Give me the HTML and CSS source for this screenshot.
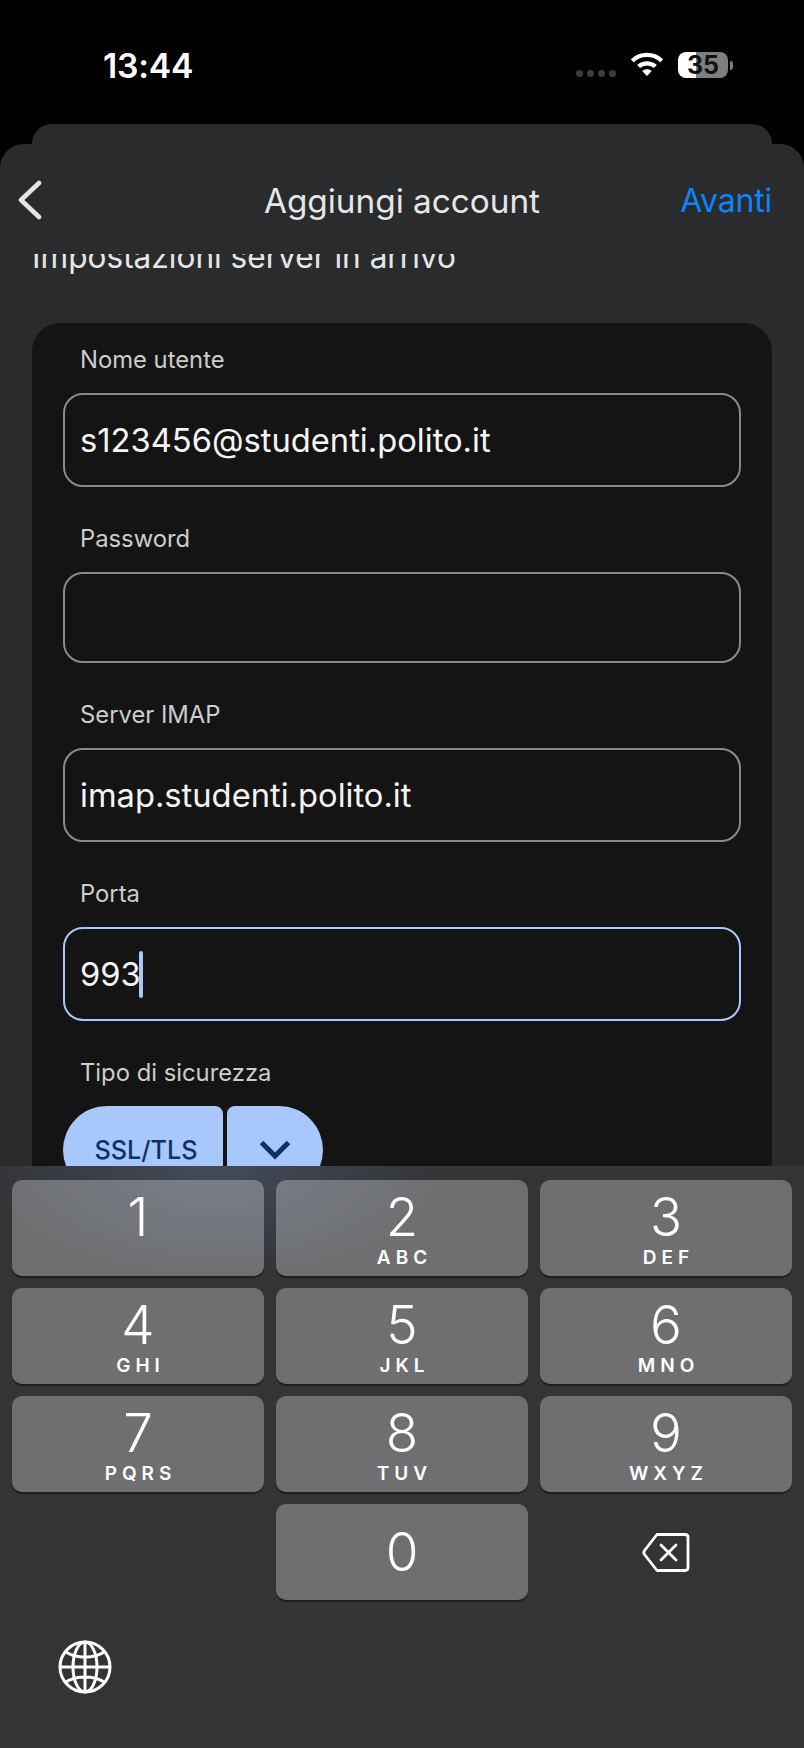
FILE: index.html
```html
<!DOCTYPE html>
<html lang="it">
<head>
<meta charset="utf-8">
<title>Aggiungi account</title>
<link rel="stylesheet" href="styles.css">
</head>
<body>
<div class="screen">
  <div class="status">
    <span class="time">13:44</span>
    <div class="status-right">
      <div class="dots"><i></i><i></i><i></i><i></i></div>
      <svg class="wifi" viewBox="0 0 32 24" width="32" height="24"><path d="M1.300 8.800C9.500 1 22.500 1 30.700 8.800" fill="none" stroke="#fff" stroke-width="4.200"/><path d="M7.600 14.500C12.300 10.200 19.700 10.200 24.400 14.500" fill="none" stroke="#fff" stroke-width="4.200"/><path d="M16 24L11.200 19C14 16.800 18 16.800 20.800 19Z" fill="#fff"/></svg>
      <div class="battery"><span>35</span></div>
      <div class="battery-tip"></div>
    </div>
  </div>
  <div class="sheet-back"></div>
  <div class="sheet">
    <header class="nav">
      <svg class="back" viewBox="0 0 26 40" width="26" height="40"><path d="M22 3L4 20L22 37" fill="none" stroke="#e6e6e6" stroke-width="4.500" stroke-linecap="round" stroke-linejoin="round"/></svg>
      <h1 class="nav-title">Aggiungi account</h1>
      <a class="nav-next">Avanti</a>
    </header>
    <div class="scroll">
      <h2 class="section-title">Impostazioni server in arrivo</h2>
      <div class="card">
        <div class="group">
          <label class="label">Nome utente</label>
          <div class="field">s123456@studenti.polito.it</div>
        </div>
        <div class="group">
          <label class="label">Password</label>
          <div class="field field-empty"></div>
        </div>
        <div class="group">
          <label class="label">Server IMAP</label>
          <div class="field">imap.studenti.polito.it</div>
        </div>
        <div class="group">
          <label class="label">Porta</label>
          <div class="field field-focus">993<span class="caret"></span></div>
        </div>
        <div class="group">
          <label class="label">Tipo di sicurezza</label>
          <div class="split">
            <div class="split-main">SSL/TLS</div>
            <div class="split-arrow"><svg viewBox="0 0 32 20" width="32" height="20"><path d="M2.500 2.500L16 16L29.500 2.500" fill="none" stroke="#0b3070" stroke-width="5"/></svg></div>
          </div>
        </div>
      </div>
    </div>
  </div>
  <div class="keyboard">
    <div class="keys">
      <div class="key"><span class="digit">1</span></div>
      <div class="key"><span class="digit">2</span><span class="letters">ABC</span></div>
      <div class="key"><span class="digit">3</span><span class="letters">DEF</span></div>
      <div class="key"><span class="digit">4</span><span class="letters">GHI</span></div>
      <div class="key"><span class="digit">5</span><span class="letters">JKL</span></div>
      <div class="key"><span class="digit">6</span><span class="letters">MNO</span></div>
      <div class="key"><span class="digit">7</span><span class="letters">PQRS</span></div>
      <div class="key"><span class="digit">8</span><span class="letters">TUV</span></div>
      <div class="key"><span class="digit">9</span><span class="letters">WXYZ</span></div>
      <div class="key-blank"></div>
      <div class="key key-zero"><span class="digit">0</span></div>
      <div class="key-blank key-delete">
        <svg viewBox="0 0 48 41" width="48" height="41"><path d="M15 2.500H43C45 2.500 46 3.500 46 5.500V35.500C46 37.500 45 38.500 43 38.500H15L2.500 22.500C1.500 21 1.500 20 2.500 18.500Z" fill="none" stroke="#fff" stroke-width="2.800" stroke-linejoin="round"/><path d="M19 13L34 28M34 13L19 28" fill="none" stroke="#fff" stroke-width="2.800" stroke-linecap="round"/></svg>
      </div>
    </div>
    <svg class="globe" viewBox="0 0 54 54" width="54" height="54" fill="none" stroke="#fff" stroke-width="3"><circle cx="27" cy="27" r="25"/><ellipse cx="27" cy="27" rx="12" ry="25"/><path d="M27 2V52M2 27H52M7 11.500C18 19 36 19 47 11.500M7 42.500C18 35 36 35 47 42.500"/></svg>
  </div>
</div>
</body>
</html>
```

FILE: styles.css
```css
* { box-sizing: border-box; }
html, body { margin: 0; padding: 0; background: #000; }
body { font-family: Inter, "Liberation Sans", sans-serif; }

.screen { width: 804px; height: 1748px; overflow: hidden; display: flex; flex-direction: column; background: #000; }

.status { height: 124px; flex: none; display: flex; justify-content: space-between; align-items: flex-start; padding: 46px 71px 0 103px; color: #fff; }
.time { font-size: 33.700px; font-weight: 600; line-height: 40px; letter-spacing: -0.2px; }
.status-right { display: flex; align-items: center; height: 38px; }
.dots { display: flex; gap: 4px; margin: 16px 15px 0 0; }
.dots i { width: 7px; height: 7px; border-radius: 50%; background: #3c3c3c; }
.wifi { margin: -2px 15px 0 0; }
.battery { width: 50px; height: 26px; border-radius: 8px; background: linear-gradient(90deg, #fff 0 18px, #7f7f7f 18px); display: flex; align-items: center; justify-content: center; color: #111; font-size: 25px; font-weight: 700; }
.battery-tip { width: 3px; height: 9px; margin-left: 2px; border-radius: 0 3px 3px 0; background: #7f7f7f; }

.sheet-back { height: 20px; flex: none; margin: 0 32px; background: #2a2b2d; border-radius: 24px 24px 0 0; }

.sheet { height: 1022px; flex: none; display: flex; flex-direction: column; background: #2a2b2d; border-radius: 24px 24px 0 0; }
.nav { height: 110px; flex: none; display: grid; grid-template-columns: 1fr auto 1fr; align-items: start; padding: 37px 32px 0; }
.back { margin-left: -15px; margin-top: -1px; }
.nav-title { margin: 0; font-size: 33.300px; font-weight: 400; line-height: 40px; color: #e6e6e6; }
.nav-next { justify-self: end; font-size: 32px; line-height: 40px; color: #0a84ff; letter-spacing: -0.2px; }

.scroll { flex: 1; overflow: hidden; }
.section-title { margin: -17px 32px 0; height: 86px; font-size: 31.600px; font-weight: 400; line-height: 40px; color: #e6e6e6; }
.card { margin: 0 32px; padding: 22px 31px 0; background: #141414; border-radius: 28px; height: 1000px; }

.group { display: flex; flex-direction: column; gap: 18px; margin-bottom: 37px; }
.label { font-size: 23.800px; line-height: 30px; padding-left: 17px; color: #cdcdcd; }
.field { height: 94px; display: flex; align-items: center; padding-left: 15px; border: 2px solid #8a8a8a; border-radius: 20px; font-size: 32.700px; color: #f4f4f4; }
.field-empty { height: 91px; }
.field-focus { border-color: #a8c7fa; }
.caret { width: 4px; height: 47px; margin-left: -2px; border-radius: 2px; background: #a8c7fa; }

.split { display: flex; gap: 4px; height: 88px; }
.split-main { width: 160px; display: flex; align-items: center; justify-content: center; padding-left: 6px; background: #a8c7fa; border-radius: 44px 8px 8px 44px; font-size: 25.200px; font-weight: 500; color: #0b3070; }
.split-arrow { width: 96px; display: flex; align-items: center; justify-content: center; background: #a8c7fa; border-radius: 8px 44px 44px 8px; }

.keyboard { flex: 1; padding: 14px 12px 0; background: radial-gradient(ellipse 230px 110px at 215px 0, #434b5b 0, rgba(51, 52, 54, 0) 100%), #333436; }
.keys { display: grid; grid-template-columns: repeat(3, 252px); grid-auto-rows: 96px; gap: 12px; }
.key { display: flex; flex-direction: column; align-items: center; background: rgba(255, 255, 255, .295); border-radius: 10px; box-shadow: 0 2px 0 #1e1f20; color: #fff; }
.digit { font-size: 53px; line-height: 50px; margin-top: 12px; font-weight: 300; }
.letters { font-size: 19px; line-height: 22px; margin-top: 5px; font-weight: 600; letter-spacing: 5px; padding-left: 5px; }
.key-zero { justify-content: center; }
.key-zero .digit { margin-top: 0; }
.key-delete { display: flex; align-items: center; justify-content: center; }
.globe { display: block; margin: 40px 0 0 46px; }
```
